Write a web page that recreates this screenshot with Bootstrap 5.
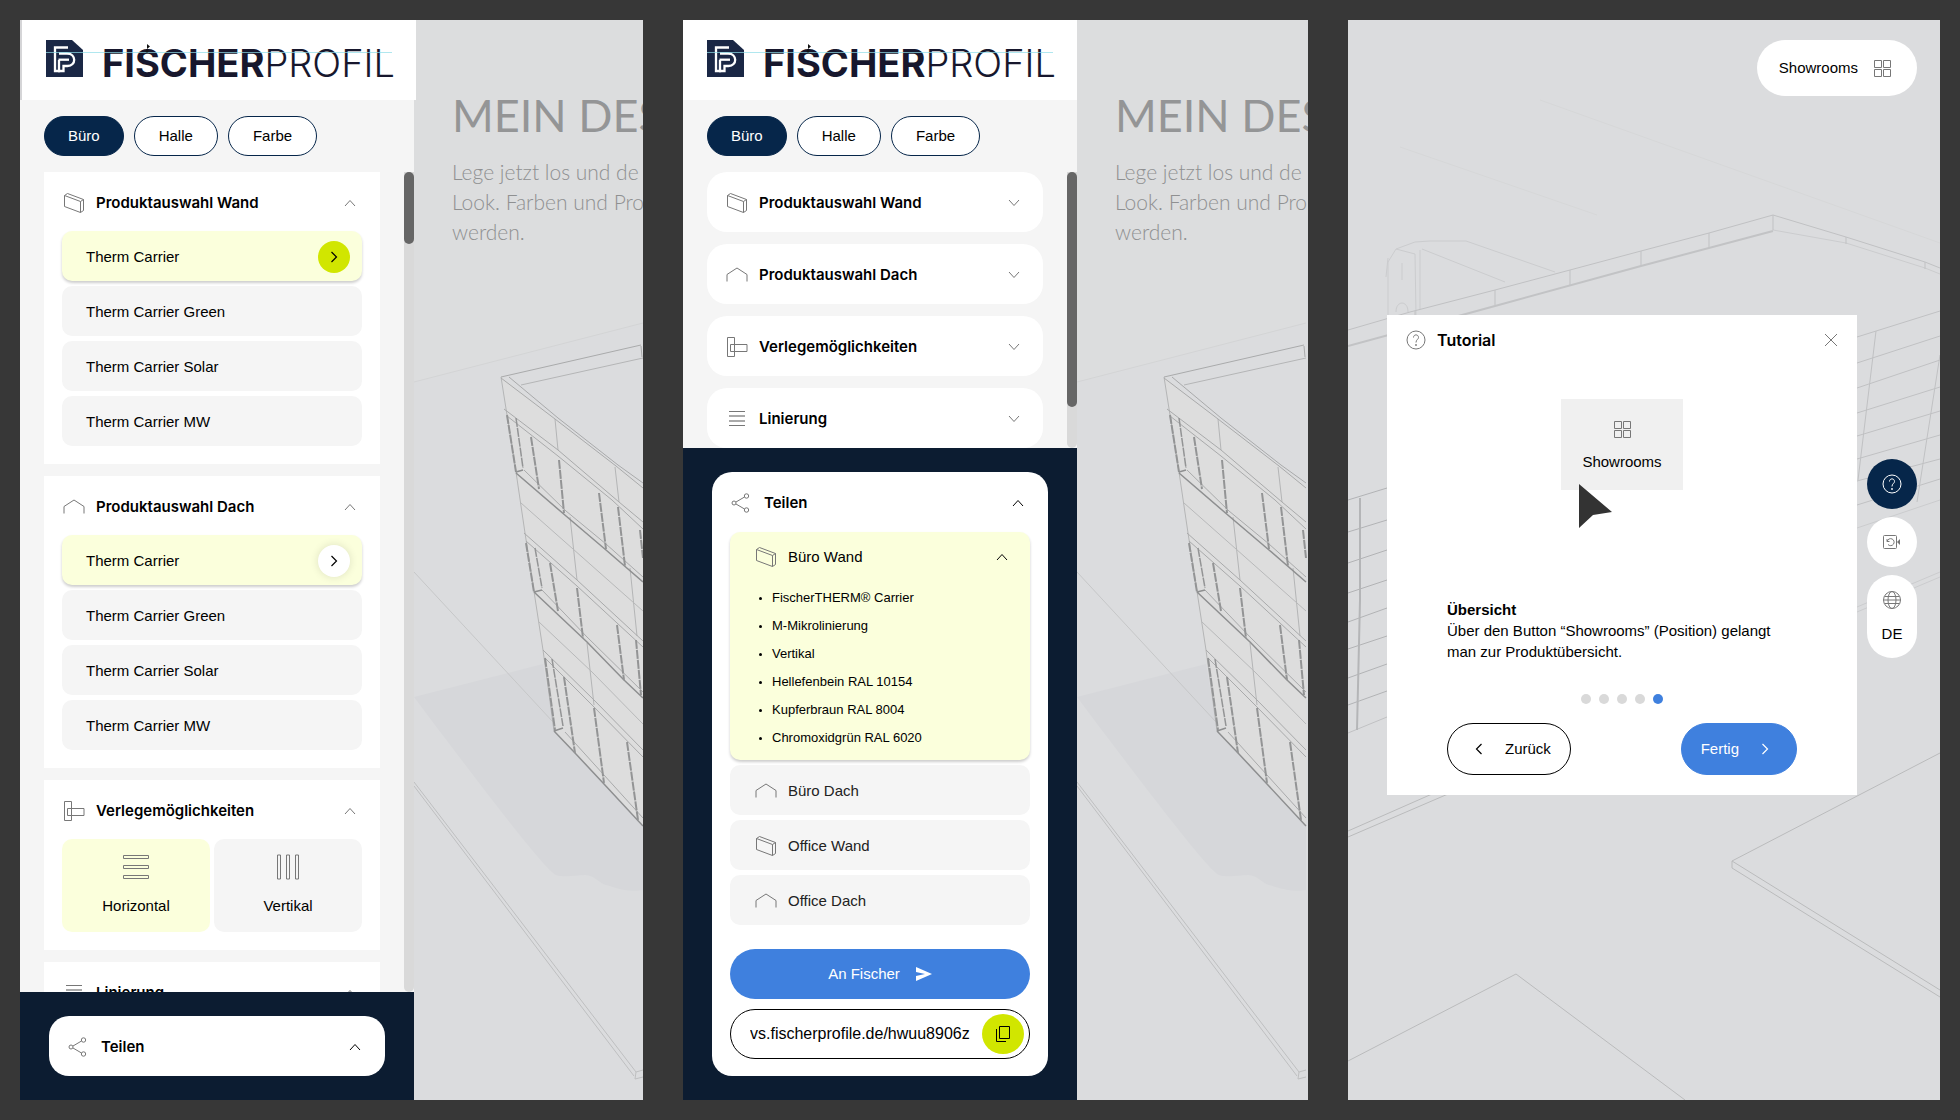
<!DOCTYPE html>
<html lang="de">
<head>
<meta charset="utf-8">
<meta name="viewport" content="width=device-width, initial-scale=1">
<title>Fischer Profil – Showroom</title>
<link href="https://cdn.jsdelivr.net/npm/bootstrap@5.3.0/dist/css/bootstrap.min.css" rel="stylesheet">
<style>
:root { --navy:#06264a; --ink:#0c1c31; --lime:#d1e600; --pale:#fbffdc; --fog:#f5f5f5; --azure:#3f80de; }
body { font-family:"Liberation Sans",Arial,sans-serif; font-size:15px; line-height:20px; color:#000; background:#373737; }
svg { display:block; flex:none; }
.ln { fill:none; stroke:#777; stroke-width:1; }
.board { height:100vh; padding:20px; gap:40px; overflow:hidden; }
.panel { position:relative; overflow:hidden; background:#dbdcde; min-width:0; }
.p-one { flex:623 1 0; } .p-two { flex:625 1 0; } .p-three { flex:592 1 0; }
.scene { position:absolute; inset:0; width:100%; height:100%; z-index:0; }
.side { width:394px; background:var(--fog); position:relative; z-index:1; }
.brand-bar { height:80px; background:#fff; padding:20px 24px; }
.brand-wide { width:396px; border-left:2px solid #d5d5d7; }
.brand-bar svg { overflow:visible; font-family:Inter,sans-serif; }
.pills { padding:16px 24px; gap:10px; }
.pill { border:1px solid var(--navy); border-radius:20px; height:40px; padding:0 24px; background:#fff; color:#000; font-size:15px; line-height:20px; }
.pill.on { background:var(--navy); color:#fff; padding:0 23px; }
.scroller { min-height:0; overflow:hidden; padding-left:24px; }
.stack { width:336px; gap:12px; }
.track { width:10px; background:#d9d9d9; border-radius:0 0 5px 5px; }
.thumb { background:#666; border-radius:5px; }
.short { height:72px; } .tall { height:85%; }
.block { background:#fff; padding:0 18px 18px; flex:none; }
.head { width:100%; height:60px; border:0; background:none; padding:2px 0 0 1px; display:flex; align-items:center; gap:11px; font-family:Inter,"Liberation Sans",sans-serif; font-weight:600; text-align:left; color:#000; }
.block .head { height:59px; padding-right:6px; }
.head span { flex:1; }
.rounded-row { background:#fff; border-radius:20px; padding:0 23px 0 18px; flex:none; }
.opts { gap:5px; }
.opt { height:50px; border:0; border-radius:10px; background:var(--fog); padding:1px 12px 0 24px; display:flex; align-items:center; gap:11px; text-align:left; color:#000; }
.opt.sel, .spec { background:var(--pale); box-shadow:0 2px 3px rgba(0,0,0,.2); }
.opt span { flex:1; }
.dot { width:32px; height:32px; border-radius:50%; display:flex; align-items:center; justify-content:center; background:#fff; box-shadow:0 0 8px rgba(0,0,0,.12); }
.dot.lime { background:var(--lime); box-shadow:none; }
.tile { flex:1; height:93px; border:0; border-radius:10px; background:var(--fog); display:flex; flex-direction:column; align-items:center; gap:16px; padding-top:15px; color:#000; }
.tile.sel { background:var(--pale); }
.foot { background:var(--ink); padding:24px 29px; }
.share { background:#fff; border-radius:20px; padding:0 18px; }
.share-open { padding-bottom:17px; }
.share .head { gap:12px; padding-right:6px; padding-left:0; }
.spec { border-radius:10px; padding:0 22px 7px 25px; height:228px; }
.spec .spec-head { height:50px; padding:0; border:0; background:none; display:flex; width:100%; align-items:center; gap:11px; text-align:left; }
.spec-head span { flex:1; }
.spec ul { margin:2px 0 0; padding-left:17px; font-size:13px; line-height:28px; }
.spec li::marker { font-size:10px; }
.opt.sub { padding-left:25px; color:#222; }
.send { height:50px; border:0; border-radius:25px; background:var(--azure); color:#fff; width:100%; }
.link-box { height:50px; margin-top:10px; border:1px solid #000; border-radius:25px; padding:0 5px 0 19px; background:#fff; font-size:16px; }
.link-box input { border:0; outline:0; min-width:0; flex:1; background:none; padding:0; color:#000; }
.copy { width:42px; height:40px; border:0; border-radius:50%; background:var(--lime); padding:0; display:flex; align-items:center; justify-content:center; }
.hero { position:relative; z-index:1; flex:1; min-width:0; padding:66px 0 0 38px; white-space:nowrap; overflow:hidden; font-family:Lato,"Liberation Sans",sans-serif; }
.hero h1 { font-size:45px; line-height:58px; font-weight:400; color:#949596; margin:0 0 13px; }
.hero p { font-size:21px; line-height:30px; font-weight:300; color:#8f9091; margin:0; }
.top-tools { position:absolute; top:20px; right:23px; z-index:2; }
.rooms { height:56px; border:0; border-radius:28px; background:#fff; color:#000; padding:0 26px 0 22px; gap:16px; font-size:15px; }
.stage { position:relative; z-index:1; width:100%; padding:0 23px 0 39px; gap:10px; }
.tut { flex:1; background:#fff; height:480px; margin-top:-10px; }
.tut-head { height:50px; padding:0 19px; gap:11px; font-family:Inter,"Liberation Sans",sans-serif; font-size:16px; font-weight:600; }
.x-btn { border:0; background:none; padding:0; }
.demo { height:234px; padding-top:34px; position:relative; }
.demo-card { width:122px; height:91px; background:#f0f0f0; padding-top:22px; gap:14px; position:relative; }
.cursor { position:absolute; left:18px; top:85px; }
.tut-body { padding:0 60px; line-height:21px; }
.dots { gap:8px; padding-top:32px; }
.dots i { width:10px; height:10px; border-radius:50%; background:#d9d9d9; }
.dots i.on { background:var(--azure); }
.nav-btns { padding:19px 60px 20px; }
.nav-btns button { height:52px; border-radius:26px; border:1px solid #000; background:#fff; color:#000; display:flex; align-items:center; padding:0 19px; gap:22px; }
.nav-btns .done { background:var(--azure); border-color:var(--azure); color:#fff; padding-right:27px; }
.tools { gap:8px; width:50px; margin-top:-3px; }
.tool { width:50px; height:50px; border:0; border-radius:25px; background:#fff; padding:0; display:flex; flex-direction:column; align-items:center; justify-content:center; color:#000; }
.tool.navy { background:var(--navy); }
.lang { height:83px; gap:14px; }
</style>
</head>
<body>
<svg width="0" height="0" class="position-absolute" aria-hidden="true">
<defs>
<symbol id="i-wall" viewBox="0 0 22 22"><g class="ln"><path d="M1.5 3.5 4.5 1.5 20.5 7.500V18.500L17.500 20.500 1.500 14.500ZM1.500 3.500 17.500 9.500V20.500M17.500 9.500 20.500 7.500"/></g></symbol>
<symbol id="i-roof" viewBox="0 0 22 22"><path class="ln" d="M1 17.500V10.500L11 4 21 10.500V17.500"/></symbol>
<symbol id="i-lay" viewBox="0 0 22 22"><path class="ln" d="M1.500 1.500H8.500V20.500H1.500ZM4.500 8.500H21V15.500H4.500Z"/></symbol>
<symbol id="i-lines" viewBox="0 0 22 22"><path class="ln" d="M3 3.500H19M3 17.500H19"/><path d="M3 8H19M3 13H19" stroke="#aaa" stroke-width="2"/></symbol>
<symbol id="i-share" viewBox="0 0 22 22"><g class="ln"><circle cx="4" cy="11" r="2"/><circle cx="16.500" cy="4" r="2.200"/><circle cx="16.500" cy="18" r="2.200"/><path d="M6 10 14.500 5M6 12 14.500 17"/></g></symbol>
<symbol id="i-up" viewBox="0 0 12 8"><path d="M1 7 6 1.500 11 7" fill="none" stroke="currentColor"/></symbol>
<symbol id="i-down" viewBox="0 0 12 8"><path d="M1 1 6 6.500 11 1" fill="none" stroke="currentColor"/></symbol>
<symbol id="i-right" viewBox="0 0 8 12"><path d="M1.500 1 6.500 6 1.500 11" fill="none" stroke="currentColor" stroke-width="1.200"/></symbol>
<symbol id="i-left" viewBox="0 0 8 12"><path d="M6.500 1 1.500 6 6.500 11" fill="none" stroke="currentColor" stroke-width="1.200"/></symbol>
<symbol id="i-grid" viewBox="0 0 17 17"><path class="ln" d="M.5.5H7.500V7.500H.5ZM9.500.5H16.500V7.500H9.500ZM.5 9.500H7.500V16.500H.5ZM9.500 9.500H16.500V16.500H9.500Z"/></symbol>
<symbol id="i-help" viewBox="0 0 20 20"><g fill="none" stroke="currentColor"><circle cx="10" cy="10" r="9"/><path d="M7.500 7.500C7.500 4 12.500 4 12.500 7.500C12.500 9.500 10 9.500 10 12.500"/></g><circle cx="10" cy="15" r=".9" fill="currentColor"/></symbol>
<symbol id="logo" viewBox="0 0 38 38"><path d="M0 0H26L37 10V37H0Z" fill="#1a2745"/><g fill="none" stroke="#fff" stroke-width="2.300"><path d="M22 7.500H9V31H13V20"/><path d="M13 13.500H21C30.500 13.500 30.500 26 21.500 26H17.500V31H12"/><path d="M12.500 19.700H23"/></g></symbol>
<g id="office">
<path d="M414 20H643V323L414 382Z" fill="#dcddde"/>
<path d="M414 697 543 664 554 730 643 826V890C625 893 612 886 606 885S595 875 585 875 566 878 556 875C545 870 480 785 414 697Z" fill="#d6d7da"/>
<path d="M501 377 643 486V826L554 731Z" fill="#dddddd"/>
<g fill="none" stroke="#c6c7c8" stroke-width="1">
<path d="M414 382 643 323" stroke="#d3d4d5"/><path d="M414 572 553 722"/>
<path d="M414 782 636 1072M414 786 634 1076M636 1072 643 1070M636 1072 635 1079 643 1077" stroke="#bebfc0"/>
<path d="M521 385 643 358M501 377 516 472 525 533 543 650 554 731M555 419 558 450M615 467 619 502M570 517 577 580M630 568 637 636M587 643 594 705" stroke="#b4b5b6"/>
<path d="M521 503 573 549 643 611M539 622 592 672 643 724" stroke="#b8b9ba"/>
</g>
<g fill="none" stroke="#a9aaab" stroke-width="1">
<path d="M501 377 641 345M509 377 558 418 618 465 643 483M501 378 555 419 616 466 643 488M641 346 642 357"/>
<path d="M504 409 558 450 619 502 643 522M507 416 558 456 612 500 643 529"/>
<path d="M524 470 566 511 606 544 643 577M524 533 577 580 643 641M526 541 577 586 643 647"/>
<path d="M542 590 587 637 643 692M543 650 594 700 643 750M545 658 594 707 643 757M565 732 643 818"/>
</g>
<g fill="none" stroke="#8e8f90" stroke-width="1.500">
<path d="M516 473 566 516 606 550 643 582M534 592 587 642 624 680 643 698M554 731 575 753 604 784 643 826M516 472 523 470M534 592 542 590M554 731 563 728"/>
</g>
<g fill="none" stroke="#939495" stroke-width="2" stroke-dasharray="9 1">
<path d="M507 415 516 472M531 437 539 489M559 460 564 513M599 493 606 549M618 507 625 566M640 530 643 558M526 543 534 592M550 563 558 611M577 588 583 638M617 625 624 680M636 640 641 695M545 658 555 730M564 677 575 753M594 708 604 783M627 742 638 820"/>
<path d="M516 418 523 468M535 548 542 588M552 659 563 726" stroke-width="1.500"/>
</g>
</g>
</defs>
</svg>

<main class="board d-flex">

<section class="panel p-one d-flex">
  <svg class="scene" viewBox="20 20 623 1080" preserveAspectRatio="xMinYMin slice" aria-hidden="true"><use href="#office"/></svg>
  <aside class="side d-flex flex-column flex-shrink-0">
    <header class="brand-bar brand-wide flex-shrink-0">
      <svg width="348" height="40" role="img" aria-label="Fischerprofil">
        <use href="#logo" width="38" height="38"/>
        <text x="56" y="37" font-size="38" font-weight="700" fill="#17172d">FISCHER<tspan font-weight="300">PROFIL</tspan></text>
        <path d="M0 12.500H346" stroke="#8fdde8" stroke-opacity=".7"/><path d="M101 4 104 6.500 101 9Z" fill="#111"/><circle cx="101" cy="11" r="1.500" fill="#111"/>
      </svg>
    </header>
    <div class="pills d-flex"><button class="pill on">Büro</button><button class="pill">Halle</button><button class="pill">Farbe</button></div>
    <div class="scroller d-flex flex-grow-1 justify-content-between">
      <div class="stack d-flex flex-column">
        <section class="block">
          <button class="head"><svg width="22" height="26"><use href="#i-wall"/></svg><span>Produktauswahl Wand</span><svg width="12" height="8" color="#777"><use href="#i-up"/></svg></button>
          <div class="opts d-flex flex-column">
            <button class="opt sel"><span>Therm Carrier</span><b class="dot lime"><svg width="8" height="12"><use href="#i-right"/></svg></b></button>
            <button class="opt"><span>Therm Carrier Green</span></button>
            <button class="opt"><span>Therm Carrier Solar</span></button>
            <button class="opt"><span>Therm Carrier MW</span></button>
          </div>
        </section>
        <section class="block">
          <button class="head"><svg width="22" height="22"><use href="#i-roof"/></svg><span>Produktauswahl Dach</span><svg width="12" height="8" color="#777"><use href="#i-up"/></svg></button>
          <div class="opts d-flex flex-column">
            <button class="opt sel"><span>Therm Carrier</span><b class="dot"><svg width="8" height="12"><use href="#i-right"/></svg></b></button>
            <button class="opt"><span>Therm Carrier Green</span></button>
            <button class="opt"><span>Therm Carrier Solar</span></button>
            <button class="opt"><span>Therm Carrier MW</span></button>
          </div>
        </section>
        <section class="block">
          <button class="head"><svg width="22" height="22"><use href="#i-lay"/></svg><span>Verlegemöglichkeiten</span><svg width="12" height="8" color="#777"><use href="#i-up"/></svg></button>
          <div class="d-flex gap-1">
            <button class="tile sel"><svg width="26" height="26"><path class="ln" d="M.5 1.500H25.500V4.500H.5ZM.5 11.500H25.500V14.500H.5ZM.5 21.500H25.500V24.500H.5Z"/></svg>Horizontal</button>
            <button class="tile"><svg width="26" height="26"><path class="ln" d="M2.500 1V25H5.500V1ZM11.500 1V25H14.500V1ZM20.500 1V25H23.500V1Z"/></svg>Vertikal</button>
          </div>
        </section>
        <section class="block">
          <button class="head"><svg width="22" height="22"><use href="#i-lines"/></svg><span>Linierung</span><svg width="12" height="8" color="#777"><use href="#i-up"/></svg></button>
        </section>
      </div>
      <div class="track"><div class="thumb short"></div></div>
    </div>
    <footer class="foot flex-shrink-0">
      <div class="share"><button class="head"><svg width="22" height="22"><use href="#i-share"/></svg><span>Teilen</span><svg width="12" height="8"><use href="#i-up"/></svg></button></div>
    </footer>
  </aside>
  <div class="hero"><h1>MEIN DES</h1><p>Lege jetzt los und de<br>Look. Farben und Pro<br>werden.</p></div>
</section>

<section class="panel p-two d-flex">
  <svg class="scene" viewBox="20 20 625 1080" preserveAspectRatio="xMinYMin slice" aria-hidden="true"><use href="#office"/></svg>
  <aside class="side d-flex flex-column flex-shrink-0">
    <header class="brand-bar flex-shrink-0">
      <svg width="348" height="40" role="img" aria-label="Fischerprofil">
        <use href="#logo" width="38" height="38"/>
        <text x="56" y="37" font-size="38" font-weight="700" fill="#17172d">FISCHER<tspan font-weight="300">PROFIL</tspan></text>
        <path d="M0 12.500H346" stroke="#8fdde8" stroke-opacity=".7"/><path d="M101 4 104 6.500 101 9Z" fill="#111"/><circle cx="101" cy="11" r="1.500" fill="#111"/>
      </svg>
    </header>
    <div class="pills d-flex"><button class="pill on">Büro</button><button class="pill">Halle</button><button class="pill">Farbe</button></div>
    <div class="scroller d-flex flex-grow-1 justify-content-between">
      <div class="stack d-flex flex-column">
        <div class="rounded-row"><button class="head"><svg width="22" height="26"><use href="#i-wall"/></svg><span>Produktauswahl Wand</span><svg width="12" height="8" color="#777"><use href="#i-down"/></svg></button></div>
        <div class="rounded-row"><button class="head"><svg width="22" height="22"><use href="#i-roof"/></svg><span>Produktauswahl Dach</span><svg width="12" height="8" color="#777"><use href="#i-down"/></svg></button></div>
        <div class="rounded-row"><button class="head"><svg width="22" height="22"><use href="#i-lay"/></svg><span>Verlegemöglichkeiten</span><svg width="12" height="8" color="#777"><use href="#i-down"/></svg></button></div>
        <div class="rounded-row"><button class="head"><svg width="22" height="22"><use href="#i-lines"/></svg><span>Linierung</span><svg width="12" height="8" color="#777"><use href="#i-down"/></svg></button></div>
      </div>
      <div class="track"><div class="thumb tall"></div></div>
    </div>
    <footer class="foot flex-shrink-0">
      <div class="share share-open">
        <button class="head"><svg width="22" height="22"><use href="#i-share"/></svg><span>Teilen</span><svg width="12" height="8"><use href="#i-up"/></svg></button>
        <div class="opts d-flex flex-column">
          <div class="spec">
            <button class="spec-head"><svg width="22" height="22"><use href="#i-wall"/></svg><span>Büro Wand</span><svg width="12" height="8"><use href="#i-up"/></svg></button>
            <ul><li>FischerTHERM® Carrier</li><li>M-Mikrolinierung</li><li>Vertikal</li><li>Hellefenbein RAL 10154</li><li>Kupferbraun RAL 8004</li><li>Chromoxidgrün RAL 6020</li></ul>
          </div>
          <button class="opt sub"><svg width="22" height="22"><use href="#i-roof"/></svg>Büro Dach</button>
          <button class="opt sub"><svg width="22" height="22"><use href="#i-wall"/></svg>Office Wand</button>
          <button class="opt sub"><svg width="22" height="22"><use href="#i-roof"/></svg>Office Dach</button>
        </div>
        <button class="send d-flex align-items-center justify-content-center gap-3 mt-4">An Fischer<svg width="16" height="14"><path d="M0 0 16 7 0 14V9L9 7 0 5Z" fill="#fff"/></svg></button>
        <div class="link-box d-flex align-items-center"><input type="text" aria-label="Link" value="vs.fischerprofile.de/hwuu8906z" readonly><button class="copy" aria-label="Kopieren"><svg width="16" height="18"><path d="M4.500 1.500H14.500V13.500H4.500ZM1.500 4V16.500H11" fill="none" stroke="#000"/></svg></button></div>
      </div>
    </footer>
  </aside>
  <div class="hero"><h1>MEIN DES</h1><p>Lege jetzt los und de<br>Look. Farben und Pro<br>werden.</p></div>
</section>

<section class="panel p-three d-flex align-items-center">
  <svg class="scene" viewBox="1348 20 592 1080" preserveAspectRatio="xMinYMin slice" aria-hidden="true">
    <g fill="none" stroke="#d2d3d4"><path d="M1400 147 1597 215M1540 100 1940 243" stroke="#d6d7d8"/>
    <path d="M1388 315V262L1396 249 1415 242 1430 241 1466 241 1555 272M1396 249 1415 254 1416 315M1420 250V310M1422 249 1505 282M1388 258 1386 277M1402 263V280M1396 312C1396 300 1408 300 1408 312" stroke="#cbccce"/></g>
    <g fill="none" stroke="#c0c1c3"><path d="M1348 330 1410 312 1495 290 1570 270 1641 251 1709 233 1773 215 1846 237 1925 262 1940 268"/><path d="M1773 230 1846 243 1925 268 1940 274" stroke="#cbccce"/>
    <path d="M1773 215V230M1709 233V247M1641 251V266M1570 270V285M1495 290V305M1415 311V320M1846 237V244M1925 262V269"/>
    <path d="M1348 346 1495 306 1641 266 1773 231" stroke="#c2c3c5" stroke-width="2"/>
    <path d="M1857 337 1940 311M1857 363 1940 336M1857 388 1940 360M1857 413 1940 387M1857 436 1940 411M1857 459 1940 435M1857 481 1940 459M1857 505 1940 479M1876 331 1858 480M1940 355 1917 502"/>
    <path d="M1857 528 1940 500M1857 607 1940 572M1857 612 1940 577" stroke="#cbccce"/>
    <path d="M1348 500 1387 488M1348 532 1387 520M1348 563 1387 550M1348 593 1387 580M1348 622 1387 608M1348 649 1387 636M1348 678 1387 664M1348 705 1387 691" stroke="#b2b3b5"/>
    <path d="M1348 733 1387 717"/><path d="M1360 498V600L1357 730" stroke="#b4b5b7" stroke-width="2"/>
    <path d="M1348 831 1432 794M1348 837 1448 794M1940 753 1732 861V868L1940 997M1732 861 1940 990M1348 1061 1516 974 1685 1100" stroke="#babbbc"/></g>
  </svg>
  <div class="top-tools"><button class="rooms d-flex align-items-center">Showrooms<svg width="17" height="17"><use href="#i-grid"/></svg></button></div>
  <div class="stage d-flex align-items-center">
    <div class="tut d-flex flex-column">
      <div class="tut-head d-flex align-items-center"><svg width="20" height="20" color="#777"><use href="#i-help"/></svg><span class="flex-grow-1">Tutorial</span><button class="x-btn" aria-label="Schließen"><svg width="14" height="14"><path class="ln" d="M1 1 13 13M13 1 1 13"/></svg></button></div>
      <div class="demo d-flex justify-content-center">
        <div class="demo-card d-flex flex-column align-items-center"><svg width="17" height="17"><use href="#i-grid"/></svg>Showrooms<svg class="cursor" width="33" height="44"><path d="M0 0 33 28 14 31 0 44Z" fill="#333"/></svg></div>
      </div>
      <div class="tut-body"><strong>Übersicht</strong><br>Über den Button “Showrooms” (Position) gelangt man zur Produktübersicht.</div>
      <div class="dots d-flex justify-content-center"><i></i><i></i><i></i><i></i><i class="on"></i></div>
      <div class="nav-btns d-flex justify-content-between"><button><svg width="16" height="12" viewBox="-8 0 16 12"><use href="#i-left" width="8" height="12"/></svg>Zurück</button><button class="done">Fertig<svg width="8" height="12"><use href="#i-right"/></svg></button></div>
    </div>
    <div class="tools d-flex flex-column">
      <button class="tool navy" aria-label="Hilfe"><svg width="20" height="20" color="#fff"><use href="#i-help"/></svg></button>
      <button class="tool" aria-label="Ansicht zurücksetzen"><svg width="20" height="18"><g class="ln"><rect x="1.500" y="2.500" width="13" height="13" rx="1"/><path d="M5 6V8.500H7.500M5.200 8.300A3.500 3.500 0 1 1 6 11.500"/></g><path d="M15 9 18 6V12Z" fill="#777"/></svg></button>
      <button class="tool lang"><svg width="20" height="20"><g class="ln"><circle cx="10" cy="10" r="8.500"/><ellipse cx="10" cy="10" rx="4" ry="8.500"/><path d="M2.500 6.500H17.500M2.500 13.500H17.500M1.500 10H18.500" /></g></svg>DE</button>
    </div>
  </div>
</section>
</main>
<script src="https://cdn.jsdelivr.net/npm/bootstrap@5.3.0/dist/js/bootstrap.bundle.min.js"></script>
</body>
</html>
